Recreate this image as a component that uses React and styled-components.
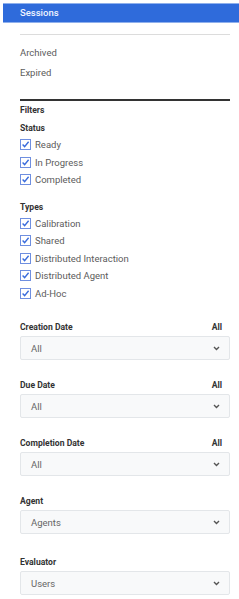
import { createGlobalStyle } from "styled-components";
import styled from "styled-components";

const GlobalStyle = createGlobalStyle`
  body {
    margin: 0;
    background: #fff;
    font-family: Roboto, "Liberation Sans", sans-serif;
  }
`;

const Panel = styled.div`
  width: 239px;
  padding-top: 3px;
  padding-left: 3px;
  box-sizing: border-box;
`;

const Header = styled.div`
  height: 20px;
  line-height: 20px;
  padding-left: 17px;
  background: #2f6bdb;
  box-shadow: inset 0 1px 0 #8fb0ec, inset 0 -1px 0 #8fb0ec;
  color: #eef3ff;
  font-size: 9.5px;
  font-weight: 500;
`;

const Body = styled.div`
  padding: 0 9px 0 17px;
`;

const Rule = styled.div`
  height: ${({ thick }) => (thick ? "2px" : "1px")};
  background: ${({ thick }) => (thick ? "#333" : "#dcdcdc")};
  margin-top: ${({ top }) => top}px;
`;

const LinkList = styled.div`
  margin-top: 8px;
`;

const LinkItem = styled.div`
  height: 20px;
  line-height: 20px;
  font-size: 9.5px;
  color: #5c5c5c;
`;

const Label = styled.div`
  display: flex;
  justify-content: space-between;
  height: 16px;
  line-height: 16px;
  padding-right: 8px;
  margin-top: ${({ top }) => top || 0}px;
  font-size: 8.6px;
  font-weight: 700;
  color: #333;
`;

const CheckRow = styled.label`
  display: flex;
  align-items: center;
  gap: 4px;
  height: 17.5px;
  font-size: 9.5px;
  color: #5c5c5c;
`;

const Group = styled.div`
  margin-top: ${({ top }) => top}px;
`;

const Select = styled.div`
  display: flex;
  align-items: center;
  justify-content: space-between;
  height: 24px;
  margin-top: 1px;
  padding: 0 9px 0 10px;
  box-sizing: border-box;
  border: 1px solid #e3e6e9;
  border-radius: 2px;
  background: #f8f9fa;
  font-size: 9.5px;
  color: #666;
`;

const Box = () => (
  <svg width="11" height="11" viewBox="0 0 11 11">
    <rect x="0.5" y="0.5" width="10" height="10" fill="#fff" stroke="#6f8fe0" />
    <path d="M2.6 5.6 L4.6 7.6 L8.6 2.8" fill="none" stroke="#3a6cdc" strokeWidth="1.4" />
  </svg>
);

const Chevron = () => (
  <svg width="7" height="5" viewBox="0 0 7 5">
    <path d="M1 1 L3.5 3.5 L6 1" fill="none" stroke="#555" strokeWidth="1.4" />
  </svg>
);

const CheckItem = ({ children }) => (
  <CheckRow>
    <Box />
    {children}
  </CheckRow>
);

const DropGroup = ({ title, value, right, top }) => (
  <Group top={top}>
    <Label>
      <span>{title}</span>
      {right && <span>{right}</span>}
    </Label>
    <Select>
      <span>{value}</span>
      <Chevron />
    </Select>
  </Group>
);

const statuses = ["Ready", "In Progress", "Completed"];
const types = ["Calibration", "Shared", "Distributed Interaction", "Distributed Agent", "Ad-Hoc"];

export default function App() {
  return (
    <Panel>
      <GlobalStyle />
      <Header>Sessions</Header>
      <Body>
        <Rule top={11} />
        <LinkList>
          <LinkItem>Archived</LinkItem>
          <LinkItem>Expired</LinkItem>
        </LinkList>
        <Rule thick top={16} />
        <Label top={1}>Filters</Label>
        <Label top={2}>Status</Label>
        {statuses.map((s) => (
          <CheckItem key={s}>{s}</CheckItem>
        ))}
        <Label top={10}>Types</Label>
        {types.map((t) => (
          <CheckItem key={t}>{t}</CheckItem>
        ))}
        <DropGroup title="Creation Date" value="All" right="All" top={17} />
        <DropGroup title="Due Date" value="All" right="All" top={17} />
        <DropGroup title="Completion Date" value="All" right="All" top={17} />
        <DropGroup title="Agent" value="Agents" top={17} />
        <DropGroup title="Evaluator" value="Users" top={20} />
      </Body>
    </Panel>
  );
}
